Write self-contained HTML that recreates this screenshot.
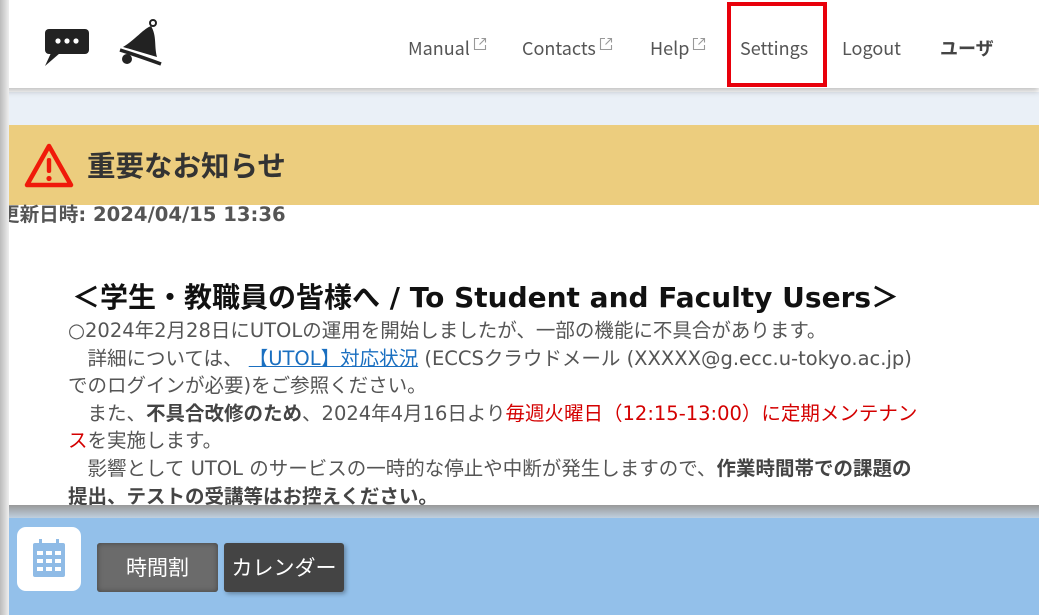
<!DOCTYPE html>
<html><head><meta charset="utf-8"><style>
*{margin:0;padding:0;box-sizing:border-box}
body{width:1039px;height:615px;overflow:hidden;background:#fff;font-family:"Noto Sans CJK JP","Liberation Sans",sans-serif;position:relative}
.lshadow{position:absolute;left:0;top:0;width:9px;height:615px;background:linear-gradient(90deg,#bbb,#eee);z-index:5}
.header{position:absolute;left:0;top:0;width:1039px;height:88px;background:#fff;box-shadow:0 3px 6px rgba(0,0,0,.25);z-index:3}
.nav{position:absolute;top:35px;font-size:18px;color:#555;white-space:nowrap}
.nav svg{margin-left:3px;vertical-align:4px}
.band{position:absolute;left:0;top:92px;width:1039px;height:33px;background:#eaf0f7}
.yellow{position:absolute;left:0;top:125px;width:1039px;height:80px;background:#eccd7e}
.title{position:absolute;left:87px;top:145px;font-size:28.5px;font-weight:bold;color:#333;line-height:40px}
.w{font-family:"DejaVu Sans","Noto Sans CJK JP",sans-serif}
.date{position:absolute;left:0;top:201px;font-size:19.6px;font-weight:bold;color:#555;line-height:28px}
.h{position:absolute;left:72px;top:277px;font-size:28px;font-weight:bold;color:#111;white-space:nowrap;line-height:42px}
.body{position:absolute;left:68px;top:317px;width:900px;font-size:19.5px;line-height:27.6px;color:#555;white-space:nowrap}
.red{color:#d40000}
b{color:#444}
a{color:#1a6fc0;text-decoration:underline}
.cover{position:absolute;left:0;top:505px;width:1039px;height:15px;background:linear-gradient(#999,#c5d8ea)}
.footer{position:absolute;left:0;top:518px;width:1039px;height:97px;background:#93c0ea}
.cal{position:absolute;left:17px;top:527px;width:64px;height:64px;background:#fff;border-radius:9px}
.btn{position:absolute;top:543px;height:49px;color:#fff;font-size:21px;line-height:49px;text-align:center;border-radius:3px}
</style></head><body>
<div class="lshadow"></div>
<div class="header">
<svg style="position:absolute;left:44px;top:28px" width="46" height="38" viewBox="0 0 46 38"><rect x="1" y="1" width="44" height="25" rx="4" fill="#222"/><path d="M7 25 L1 38 L16 25Z" fill="#222"/><circle cx="14" cy="13" r="2.6" fill="#fff"/><circle cx="23" cy="13" r="2.6" fill="#fff"/><circle cx="32" cy="13" r="2.6" fill="#fff"/></svg>
<svg style="position:absolute;left:117px;top:18px" width="46" height="48" viewBox="0 0 46 48"><circle cx="36" cy="5" r="3" fill="none" stroke="#222" stroke-width="2"/><path d="M34 8 C26 11 18 22 6 29 L40 39 C37 28 40 18 34 8Z" fill="#222"/><path d="M3 32 Q22 38 44 46" stroke="#222" stroke-width="3.5" fill="none"/><circle cx="10" cy="41" r="5" fill="#222"/></svg>
<svg width="0" height="0" style="position:absolute"><defs><symbol id="ex" viewBox="0 0 14 14"><path d="M6 1.5H1.5V12.5H12.5V8M8.5 1.5H12.5V5.5M12.5 1.5L6.5 7.5" fill="none" stroke="#999" stroke-width="1.1"/></symbol></defs></svg>
<div class="nav" style="left:408px">Manual<svg width="14" height="14"><use href="#ex"/></svg></div>
<div class="nav" style="left:522px">Contacts<svg width="14" height="14"><use href="#ex"/></svg></div>
<div class="nav" style="left:650px">Help<svg width="14" height="14"><use href="#ex"/></svg></div>
<div class="nav" style="left:740px">Settings</div>
<div class="nav" style="left:842px">Logout</div>
<div class="nav" style="left:940px;font-weight:bold;color:#444">ユーザ</div>
<div style="position:absolute;left:727px;top:2px;width:100px;height:85px;border:4px solid #e8000b"></div>
</div>
<div class="band"></div>
<div class="yellow">
<svg style="position:absolute;left:24px;top:18px" width="50" height="46" viewBox="0 0 50 46"><path d="M25 3 L47 42 L3 42Z" fill="none" stroke="#f01a0a" stroke-width="4.5" stroke-linejoin="round"/><rect x="22.8" y="15" width="4.4" height="15" rx="2" fill="#f01a0a"/><circle cx="25" cy="35.5" r="2.6" fill="#f01a0a"/></svg>
</div>
<div class="title">重要なお知らせ</div>
<div class="date w">更新日時: 2024/04/15 13:36</div>
<div class="h w">＜学生・教職員の皆様へ / To Student and Faculty Users＞</div>
<div class="body w">○2024年2月28日にUTOLの運用を開始しましたが、一部の機能に不具合があります。<br>
　詳細については、 <a>【UTOL】対応状況</a> (ECCSクラウドメール (XXXXX@g.ecc.u-tokyo.ac.jp)<br>
でのログインが必要)をご参照ください。<br>
　また、<b>不具合改修のため</b>、2024年4月16日より<span class="red">毎週火曜日（12:15-13:00）に定期メンテナン<br>ス</span>を実施します。<br>
　影響として UTOL のサービスの一時的な停止や中断が発生しますので、<b>作業時間帯での課題の<br>提出、テストの受講等はお控えください。</b></div>
<div class="cover"></div>
<div class="footer"></div>
<div class="cal"><svg style="position:absolute;left:16px;top:12px" width="32" height="38" viewBox="0 0 32 38"><rect x="0" y="4" width="32" height="34" rx="2" fill="#8fbbe6"/><rect x="6" y="0" width="3" height="7" fill="#8fbbe6"/><rect x="23" y="0" width="3" height="7" fill="#8fbbe6"/><g fill="#fff"><rect x="4" y="12" width="6" height="4"/><rect x="13" y="12" width="6" height="4"/><rect x="22" y="12" width="6" height="4"/><rect x="4" y="20" width="6" height="4"/><rect x="13" y="20" width="6" height="4"/><rect x="22" y="20" width="6" height="4"/><rect x="4" y="28" width="6" height="4"/><rect x="13" y="28" width="6" height="4"/><rect x="22" y="28" width="6" height="4"/></g></svg></div>
<div class="btn" style="left:97px;width:121px;background:#6b6b6b;box-shadow:inset 0 0 6px #444">時間割</div>
<div class="btn" style="left:224px;width:120px;background:#444;box-shadow:2px 2px 4px rgba(0,0,0,.3)">カレンダー</div>
</body></html>
